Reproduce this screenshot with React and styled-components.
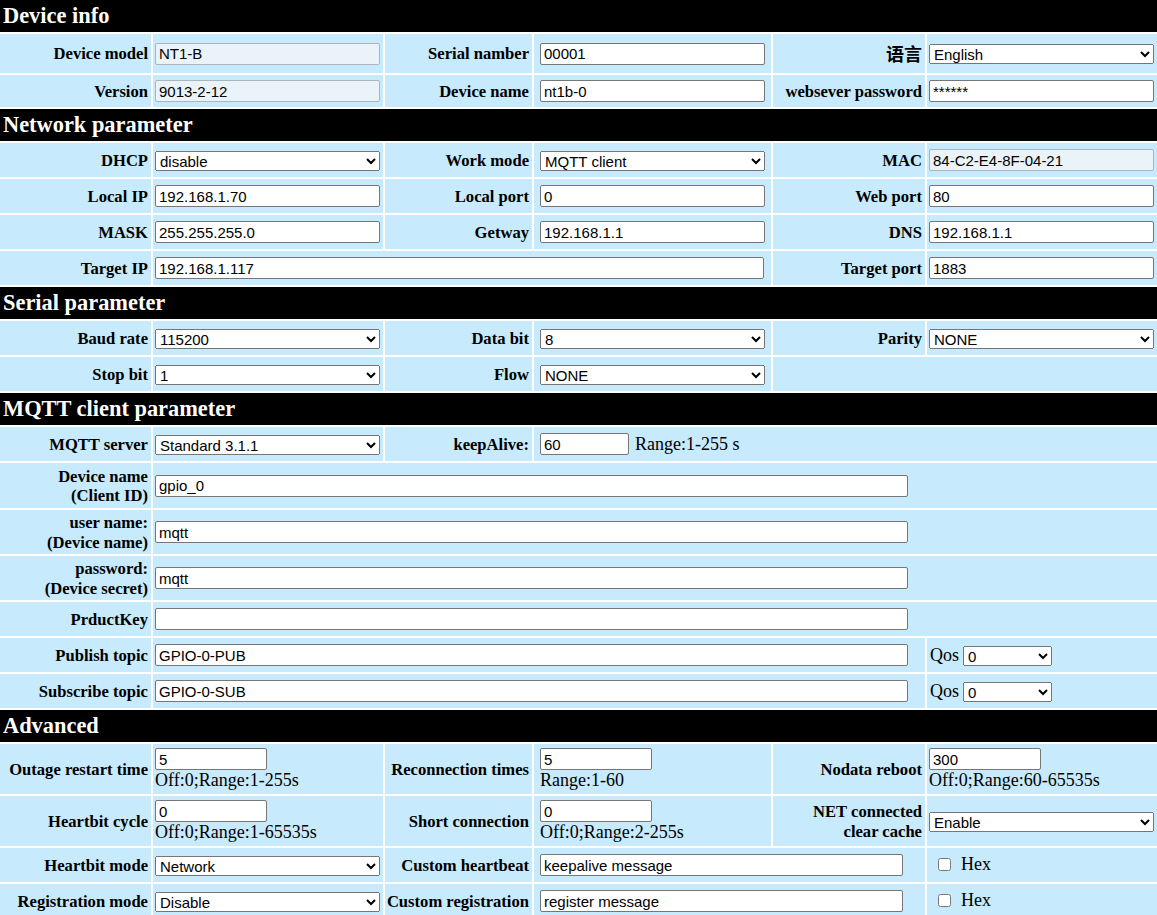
import React from "react";
import styled, { createGlobalStyle } from "styled-components";

const Global = createGlobalStyle`
  html, body { margin: 0; padding: 0; background: #ffffff; }
  body {
    font-family: "Liberation Serif", "Times New Roman", serif;
    font-size: 18px;
    color: #000;
    overflow: hidden;
  }
`;

const Table = styled.table`
  border-collapse: separate;
  border-spacing: 2px;
  table-layout: fixed;
  width: 1161px;
  margin: -2px -2px 0 -2px;
`;

const HeadCell = styled.td`
  background: #000;
  color: #fff;
  font-weight: bold;
  font-size: 22.4px;
  height: 32px;
  padding: 0 0 0 3px;
  vertical-align: middle;
  white-space: nowrap;
`;

const Row = styled.tr`
  height: ${(p) => p.$h || 34}px;
`;

const Label = styled.td`
  background: #c7eafc;
  text-align: right;
  font-weight: bold;
  font-size: 16.6px;
  padding: 1px 3px 0 0;
  vertical-align: middle;
  white-space: nowrap;
  line-height: 19.5px;
`;

const CjkLabel = styled(Label)`
  font-family: "Noto Sans CJK SC", "Liberation Serif", sans-serif;
  font-size: 18px;
  padding-top: 0;
`;

const Field = styled.td`
  background: #c7eafc;
  padding: 0 0 0 ${(p) => (p.$pl != null ? p.$pl : 2)}px;
  vertical-align: middle;
  white-space: nowrap;
`;

const TextInput = styled.input`
  box-sizing: border-box;
  width: ${(p) => p.$w || 225}px;
  height: 22px;
  margin: 0;
  padding: 1px 3px;
  border: 1px solid #767676;
  border-radius: 2px;
  background: ${(p) => (p.readOnly ? "#eaf3f8" : "#ffffff")};
  border-color: ${(p) => (p.readOnly ? "#a9b6bf" : "#767676")};
  font-family: "Liberation Sans", Arial, sans-serif;
  font-size: 15px;
  color: #000;
  vertical-align: middle;
  outline: none;
`;

const BlockInput = styled(TextInput)`
  display: block;
`;

const Select = styled.select`
  box-sizing: border-box;
  width: ${(p) => p.$w || 225}px;
  height: 20px;
  margin: 0;
  font-family: "Liberation Sans", Arial, sans-serif;
  font-size: 15px;
  color: #000;
  vertical-align: middle;
`;

const Hint = styled.div`
  line-height: 20px;
  font-size: 18px;
`;

const Note = styled.span`
  margin-left: 6px;
  vertical-align: middle;
`;

const QosText = styled.span`
  margin: 0 4px 0 1px;
  vertical-align: middle;
`;

const CheckWrap = styled.label`
  display: inline-flex;
  align-items: center;
  margin-left: 11px;
  gap: 10px;
`;

const Check = styled.input`
  width: 13px;
  height: 13px;
  margin: 0;
`;

const Section = ({ title }) => (
  <tr>
    <HeadCell colSpan={6}>{title}</HeadCell>
  </tr>
);

const Sel = ({ value, options, w }) => (
  <Select $w={w} defaultValue={value}>
    {(options || [value]).map((o) => (
      <option key={o} value={o}>
        {o}
      </option>
    ))}
  </Select>
);

const In = ({ value, w, ro }) => (
  <TextInput type="text" $w={w} defaultValue={value} readOnly={ro} />
);

export default function App() {
  return (
    <>
      <Global />
      <Table>
        <colgroup>
          <col style={{ width: 151 }} />
          <col style={{ width: 230 }} />
          <col style={{ width: 147 }} />
          <col style={{ width: 237 }} />
          <col style={{ width: 152 }} />
          <col style={{ width: 230 }} />
        </colgroup>
        <tbody>
          <Section title="Device info" />
          <Row $h={39}>
            <Label>Device model</Label>
            <Field><In value="NT1-B" ro /></Field>
            <Label>Serial namber</Label>
            <Field $pl={6}><In value="00001" /></Field>
            <CjkLabel>语言</CjkLabel>
            <Field><Sel value="English" options={["English", "中文"]} /></Field>
          </Row>
          <Row $h={32}>
            <Label>Version</Label>
            <Field><In value="9013-2-12" ro /></Field>
            <Label>Device name</Label>
            <Field $pl={6}><In value="nt1b-0" /></Field>
            <Label>websever password</Label>
            <Field><In value="******" /></Field>
          </Row>

          <Section title="Network parameter" />
          <Row>
            <Label>DHCP</Label>
            <Field><Sel value="disable" options={["disable", "enable"]} /></Field>
            <Label>Work mode</Label>
            <Field $pl={6}><Sel value="MQTT client" /></Field>
            <Label>MAC</Label>
            <Field><In value="84-C2-E4-8F-04-21" ro /></Field>
          </Row>
          <Row>
            <Label>Local IP</Label>
            <Field><In value="192.168.1.70" /></Field>
            <Label>Local port</Label>
            <Field $pl={6}><In value="0" /></Field>
            <Label>Web port</Label>
            <Field><In value="80" /></Field>
          </Row>
          <Row>
            <Label>MASK</Label>
            <Field><In value="255.255.255.0" /></Field>
            <Label>Getway</Label>
            <Field $pl={6}><In value="192.168.1.1" /></Field>
            <Label>DNS</Label>
            <Field><In value="192.168.1.1" /></Field>
          </Row>
          <Row>
            <Label>Target IP</Label>
            <Field colSpan={3}><In value="192.168.1.117" w={609} /></Field>
            <Label>Target port</Label>
            <Field><In value="1883" /></Field>
          </Row>

          <Section title="Serial parameter" />
          <Row>
            <Label>Baud rate</Label>
            <Field><Sel value="115200" /></Field>
            <Label>Data bit</Label>
            <Field $pl={6}><Sel value="8" /></Field>
            <Label>Parity</Label>
            <Field><Sel value="NONE" /></Field>
          </Row>
          <Row>
            <Label>Stop bit</Label>
            <Field><Sel value="1" /></Field>
            <Label>Flow</Label>
            <Field $pl={6}><Sel value="NONE" /></Field>
            <Field colSpan={2} />
          </Row>

          <Section title="MQTT client parameter" />
          <Row>
            <Label>MQTT server</Label>
            <Field><Sel value="Standard 3.1.1" /></Field>
            <Label>keepAlive:</Label>
            <Field colSpan={3} $pl={6}>
              <In value="60" w={89} />
              <Note>Range:1-255 s</Note>
            </Field>
          </Row>
          <Row $h={45}>
            <Label>Device name<br />(Client ID)</Label>
            <Field colSpan={5}><In value="gpio_0" w={753} /></Field>
          </Row>
          <Row $h={44}>
            <Label>user name:<br />(Device name)</Label>
            <Field colSpan={5}><In value="mqtt" w={753} /></Field>
          </Row>
          <Row $h={44}>
            <Label>password:<br />(Device secret)</Label>
            <Field colSpan={5}><In value="mqtt" w={753} /></Field>
          </Row>
          <Row>
            <Label>PrductKey</Label>
            <Field colSpan={5}><In value="" w={753} /></Field>
          </Row>
          <Row>
            <Label>Publish topic</Label>
            <Field colSpan={4}><In value="GPIO-0-PUB" w={753} /></Field>
            <Field>
              <QosText>Qos</QosText>
              <Sel value="0" options={["0", "1", "2"]} w={89} />
            </Field>
          </Row>
          <Row>
            <Label>Subscribe topic</Label>
            <Field colSpan={4}><In value="GPIO-0-SUB" w={753} /></Field>
            <Field>
              <QosText>Qos</QosText>
              <Sel value="0" options={["0", "1", "2"]} w={89} />
            </Field>
          </Row>

          <Section title="Advanced" />
          <Row $h={50}>
            <Label>Outage restart time</Label>
            <Field>
              <BlockInput type="text" $w={112} defaultValue="5" />
              <Hint>Off:0;Range:1-255s</Hint>
            </Field>
            <Label>Reconnection times</Label>
            <Field $pl={6}>
              <BlockInput type="text" $w={112} defaultValue="5" />
              <Hint>Range:1-60</Hint>
            </Field>
            <Label>Nodata reboot</Label>
            <Field>
              <BlockInput type="text" $w={112} defaultValue="300" />
              <Hint>Off:0;Range:60-65535s</Hint>
            </Field>
          </Row>
          <Row $h={50}>
            <Label>Heartbit cycle</Label>
            <Field>
              <BlockInput type="text" $w={112} defaultValue="0" />
              <Hint>Off:0;Range:1-65535s</Hint>
            </Field>
            <Label>Short connection</Label>
            <Field $pl={6}>
              <BlockInput type="text" $w={112} defaultValue="0" />
              <Hint>Off:0;Range:2-255s</Hint>
            </Field>
            <Label>NET connected<br />clear cache</Label>
            <Field><Sel value="Enable" options={["Enable", "Disable"]} /></Field>
          </Row>
          <Row>
            <Label>Heartbit mode</Label>
            <Field><Sel value="Network" /></Field>
            <Label>Custom heartbeat</Label>
            <Field colSpan={2} $pl={6}><In value="keepalive message" w={363} /></Field>
            <Field $pl={0}>
              <CheckWrap><Check type="checkbox" />Hex</CheckWrap>
            </Field>
          </Row>
          <Row>
            <Label>Registration mode</Label>
            <Field><Sel value="Disable" /></Field>
            <Label>Custom registration</Label>
            <Field colSpan={2} $pl={6}><In value="register message" w={363} /></Field>
            <Field $pl={0}>
              <CheckWrap><Check type="checkbox" />Hex</CheckWrap>
            </Field>
          </Row>
        </tbody>
      </Table>
    </>
  );
}
